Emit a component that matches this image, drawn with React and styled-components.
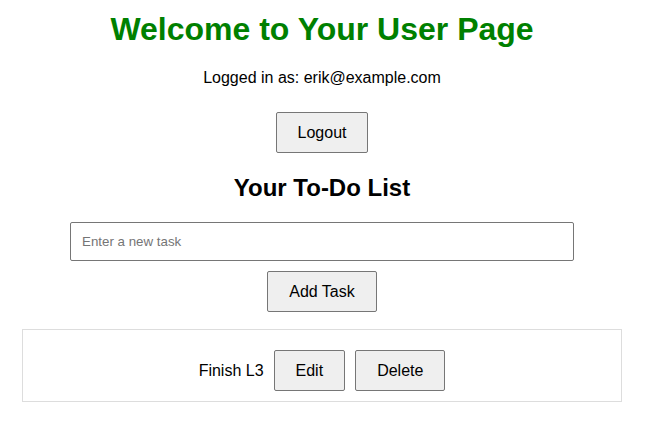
import React, { useState } from 'react'
import styled, { createGlobalStyle } from 'styled-components'

const Global = createGlobalStyle`
  html, body {
    margin: 0;
    padding: 0;
    background: #fff;
  }
  body {
    font-family: "Liberation Sans", Arial, sans-serif;
    color: #000;
  }
`

const Page = styled.main`
  display: flex;
  flex-direction: column;
  align-items: center;
  padding: 11px 32px 0 22px;
`

const Title = styled.h1`
  margin: 0;
  font-size: 32px;
  font-weight: 700;
  line-height: 37px;
  color: #008000;
`

const LoggedIn = styled.p`
  margin: 20px 0 0;
  font-size: 16px;
  line-height: 19px;
`

const Button = styled.button`
  font-family: "Liberation Sans", Arial, sans-serif;
  font-size: 16px;
  line-height: 19px;
  padding: 10px 21px;
  color: #000;
  background: #efefef;
  border: 1px solid #767676;
  border-radius: 2px;
  margin-top: ${p => p.$top || 0}px;
  cursor: pointer;
`

const SectionTitle = styled.h2`
  margin: 21px 0 0;
  font-size: 24px;
  font-weight: 700;
  line-height: 28px;
`

const TaskInput = styled.input`
  box-sizing: border-box;
  width: 504px;
  height: 39px;
  margin-top: 20px;
  padding: 0 11px;
  font-family: "Liberation Sans", Arial, sans-serif;
  font-size: 13.33px;
  color: #000;
  border: 1px solid #767676;
  border-radius: 2px;
  outline: none;

  &::placeholder {
    color: #757575;
  }
`

const TaskList = styled.ul`
  list-style: none;
  margin: 17px 0 0;
  padding: 0;
  align-self: stretch;
`

const TaskItem = styled.li`
  display: flex;
  align-items: center;
  justify-content: center;
  gap: 10px;
  padding: 20px 10px 10px;
  border: 1px solid #ddd;
  font-size: 16px;
`

export default function App() {
  const [tasks] = useState(['Finish L3'])

  return (
    <>
      <Global />
      <Page>
        <Title>Welcome to Your User Page</Title>
        <LoggedIn>Logged in as: erik@example.com</LoggedIn>
        <Button $top={25}>Logout</Button>
        <SectionTitle>Your To-Do List</SectionTitle>
        <TaskInput type="text" placeholder="Enter a new task" />
        <Button $top={10}>Add Task</Button>
        <TaskList>
          {tasks.map(task => (
            <TaskItem key={task}>
              <span>{task}</span>
              <Button>Edit</Button>
              <Button>Delete</Button>
            </TaskItem>
          ))}
        </TaskList>
      </Page>
    </>
  )
}
